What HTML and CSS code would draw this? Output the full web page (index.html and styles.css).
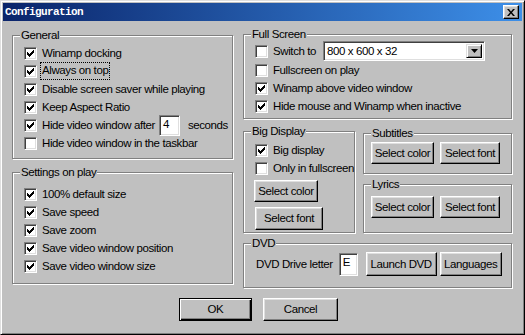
FILE: index.html
```html
<!DOCTYPE html>
<html>
<head>
<meta charset="utf-8">
<title>Configuration</title>
<link rel="stylesheet" href="styles.css">
</head>
<body>
<div class="window">
  <div class="titlebar">
    <span class="title">Configuration</span>
    <span class="close"><svg width="8" height="7" viewBox="0 0 8 7"><path d="M0 0h2l2 2.4L6 0h2L5 3.5 8 7H6L4 4.6 2 7H0l3-3.5z" fill="#000"/></svg></span>
  </div>

  <div class="main">
    <div class="col-left">
      <fieldset class="group general">
        <legend>General</legend>
        <div class="rows">
          <div class="row"><span class="cb on"></span>Winamp docking</div>
          <div class="row"><span class="cb on"></span><span class="focus">Always on top</span></div>
          <div class="row"><span class="cb on"></span>Disable screen saver while playing</div>
          <div class="row"><span class="cb on"></span>Keep Aspect Ratio</div>
          <div class="row"><span class="cb on"></span>Hide video window after<span class="edit secs">4</span>seconds</div>
          <div class="row"><span class="cb"></span>Hide video window in the taskbar</div>
        </div>
      </fieldset>
      <fieldset class="group settings">
        <legend>Settings on play</legend>
        <div class="rows">
          <div class="row"><span class="cb on"></span>100% default size</div>
          <div class="row"><span class="cb on"></span>Save speed</div>
          <div class="row"><span class="cb on"></span>Save zoom</div>
          <div class="row"><span class="cb on"></span>Save video window position</div>
          <div class="row"><span class="cb on"></span>Save video window size</div>
        </div>
      </fieldset>
    </div>

    <div class="col-right">
      <fieldset class="group fullscreen">
        <legend>Full Screen</legend>
        <div class="rows">
          <div class="row row-combo"><span class="cb"></span>Switch to
            <span class="combo"><span class="combo-text">800 x 600 x 32</span><span class="combo-btn"><svg width="7" height="4" viewBox="0 0 7 4"><path d="M0 0h7L3.5 4z" fill="#000"/></svg></span></span>
          </div>
          <div class="row"><span class="cb"></span>Fullscreen on play</div>
          <div class="row"><span class="cb on"></span>Winamp above video window</div>
          <div class="row"><span class="cb on"></span>Hide mouse and Winamp when inactive</div>
        </div>
      </fieldset>

      <div class="mid">
        <fieldset class="group bigdisplay">
          <legend>Big Display</legend>
          <div class="rows">
            <div class="row"><span class="cb on"></span>Big display</div>
            <div class="row"><span class="cb"></span>Only in fullscreen</div>
          </div>
          <button class="btn bd-color">Select color</button>
          <button class="btn bd-font">Select font</button>
        </fieldset>
        <div class="stack">
          <fieldset class="group subtitles">
            <legend>Subtitles</legend>
            <div class="btnrow">
              <button class="btn sel-color">Select color</button>
              <button class="btn sel-font">Select font</button>
            </div>
          </fieldset>
          <fieldset class="group lyrics">
            <legend>Lyrics</legend>
            <div class="btnrow">
              <button class="btn sel-color">Select color</button>
              <button class="btn sel-font">Select font</button>
            </div>
          </fieldset>
        </div>
      </div>

      <fieldset class="group dvd">
        <legend>DVD</legend>
        <div class="dvdrow">
          DVD Drive letter
          <span class="edit letter">E</span>
          <button class="btn launch">Launch DVD</button>
          <button class="btn langs">Languages</button>
        </div>
      </fieldset>
    </div>
  </div>

  <div class="footer">
    <button class="btn default ok">OK</button>
    <button class="btn cancel">Cancel</button>
  </div>
</div>
</body>
</html>
```

FILE: styles.css
```css
*{ box-sizing:border-box;}
body{ margin:0; background:#c0c0c0; color:#000; font:11.5px/13px "Liberation Sans", Arial, sans-serif; letter-spacing:-0.4px;}

.window{ width:525px; height:335px; padding:2px; background:#c0c0c0; border:1px solid; border-color:#dfdfdf #000 #000 #dfdfdf; box-shadow:inset 1px 1px #fff, inset -1px -1px #808080;}

/* title bar */
.titlebar{ height:18px; display:flex; align-items:center; justify-content:space-between; padding:0 3px 0 2px; background:linear-gradient(to right,#0a246a,#3d8fe8);}
.title{ color:#fff; font:bold 11px/18px "Liberation Mono", monospace; letter-spacing:-0.6px;}
.close{ width:16px; height:14px; display:flex; align-items:center; justify-content:center; background:#c0c0c0; border:1px solid; border-color:#fff #000 #000 #fff; box-shadow:inset -1px -1px #808080, inset 1px 1px #dfdfdf;}

/* columns */
.main{ display:flex; gap:10px; height:267px; padding:7px 0 0 9px;}
.col-left{ width:221px; display:flex; flex-direction:column; gap:7px; padding-top:1px;}
.col-right{ width:269px; display:flex; flex-direction:column;}
.mid{ display:flex; gap:8px; margin-top:6px;}
.stack{ width:149px; display:flex; flex-direction:column; gap:4px; padding-top:2px;}

/* group boxes */
.group{ margin:0; padding:0 0 0 7px; min-width:0; border:1px solid #808080; box-shadow:inset 1px 1px #fff, 1px 1px #fff;}
.group legend{ padding:0 1px; line-height:13px; background:#c0c0c0;}
.general{ height:130px; padding-top:2px;}
.settings{ height:118px; padding-top:6px;}
.fullscreen{ height:91px;}
.bigdisplay{ width:112px; height:108px; padding-top:3px;}
.subtitles{ height:47px; padding-top:2px;}
.lyrics{ height:55px; padding-top:5px;}
.dvd{ height:51px; margin-top:4px; padding-top:2px;}

.rows{ padding-left:4px;}
.row{ height:18px; display:flex; align-items:center; white-space:nowrap;}
.row-combo{ height:20px;}

/* checkbox */
.cb{ width:13px; height:13px; flex:none; margin-right:5px; background:#fff; border:1px solid; border-color:#808080 #fff #fff #808080; box-shadow:inset 1px 1px #404040, inset -1px -1px #dfdfdf;}
.cb.on::after{ content:""; display:block; width:1px; height:1px; margin:2px 0 0 2px;
  box-shadow:6px 0 #000,
    5px 1px #000, 6px 1px #000,
    0 2px #000, 4px 2px #000, 5px 2px #000, 6px 2px #000,
    0 3px #000, 1px 3px #000, 3px 3px #000, 4px 3px #000, 5px 3px #000,
    0 4px #000, 1px 4px #000, 2px 4px #000, 3px 4px #000, 4px 4px #000,
    1px 5px #000, 2px 5px #000, 3px 5px #000,
    2px 6px #000;}
.focus{ outline:1px dotted #000; padding:1px 1px 2px; margin-left:-1px;}

/* edits */
.edit{ display:inline-block; background:#fff; border:1px solid; border-color:#808080 #fff #fff #808080; box-shadow:inset 1px 1px #404040, inset -1px -1px #dfdfdf; padding:2px 0 0 3px;}
.secs{ width:21px; height:21px; margin:0 8px 0 4px;}
.letter{ width:19px; height:23px; margin-left:6px; flex:none;}

.combo{ width:162px; height:20px; margin-left:7px; display:flex; padding:2px; background:#fff; border:1px solid; border-color:#808080 #fff #fff #808080; box-shadow:inset 1px 1px #404040, inset -1px -1px #dfdfdf;}
.combo-text{ flex:1; padding:1px 0 0 1px;}
.combo-btn{ width:16px; display:flex; align-items:center; justify-content:center; background:#c0c0c0; border:1px solid; border-color:#dfdfdf #000 #000 #dfdfdf; box-shadow:inset 1px 1px #fff, inset -1px -1px #808080;}

/* buttons */
.btn{ font:inherit; letter-spacing:inherit; color:#000; height:22px; padding:0; background:#c0c0c0; border:1px solid; border-color:#fff #000 #000 #fff; box-shadow:inset -1px -1px #808080, inset 1px 1px #dfdfdf; white-space:nowrap;}
.btn.default{ border-color:#000; box-shadow:inset 1px 1px #fff, inset -1px -1px #000, inset -2px -2px #808080;}
.bd-color{ display:block; width:64px; margin:3px 0 0 3px;}
.bd-font{ display:block; width:68px; height:23px; margin:5px 0 0 4px;}
.btnrow{ display:flex; gap:6px;}
.sel-color{ width:63px;}
.sel-font{ width:60px;}

.dvdrow{ display:flex; align-items:center; height:24px; padding-left:5px; white-space:nowrap;}
.launch{ width:71px; height:24px; margin-left:8px;}
.langs{ width:62px; height:24px; margin-left:3px;}

/* dialog buttons */
.footer{ display:flex; gap:11px; padding:10px 0 0 176px;}
.ok{ width:73px; height:23px;}
.cancel{ width:75px; height:23px;}
```
